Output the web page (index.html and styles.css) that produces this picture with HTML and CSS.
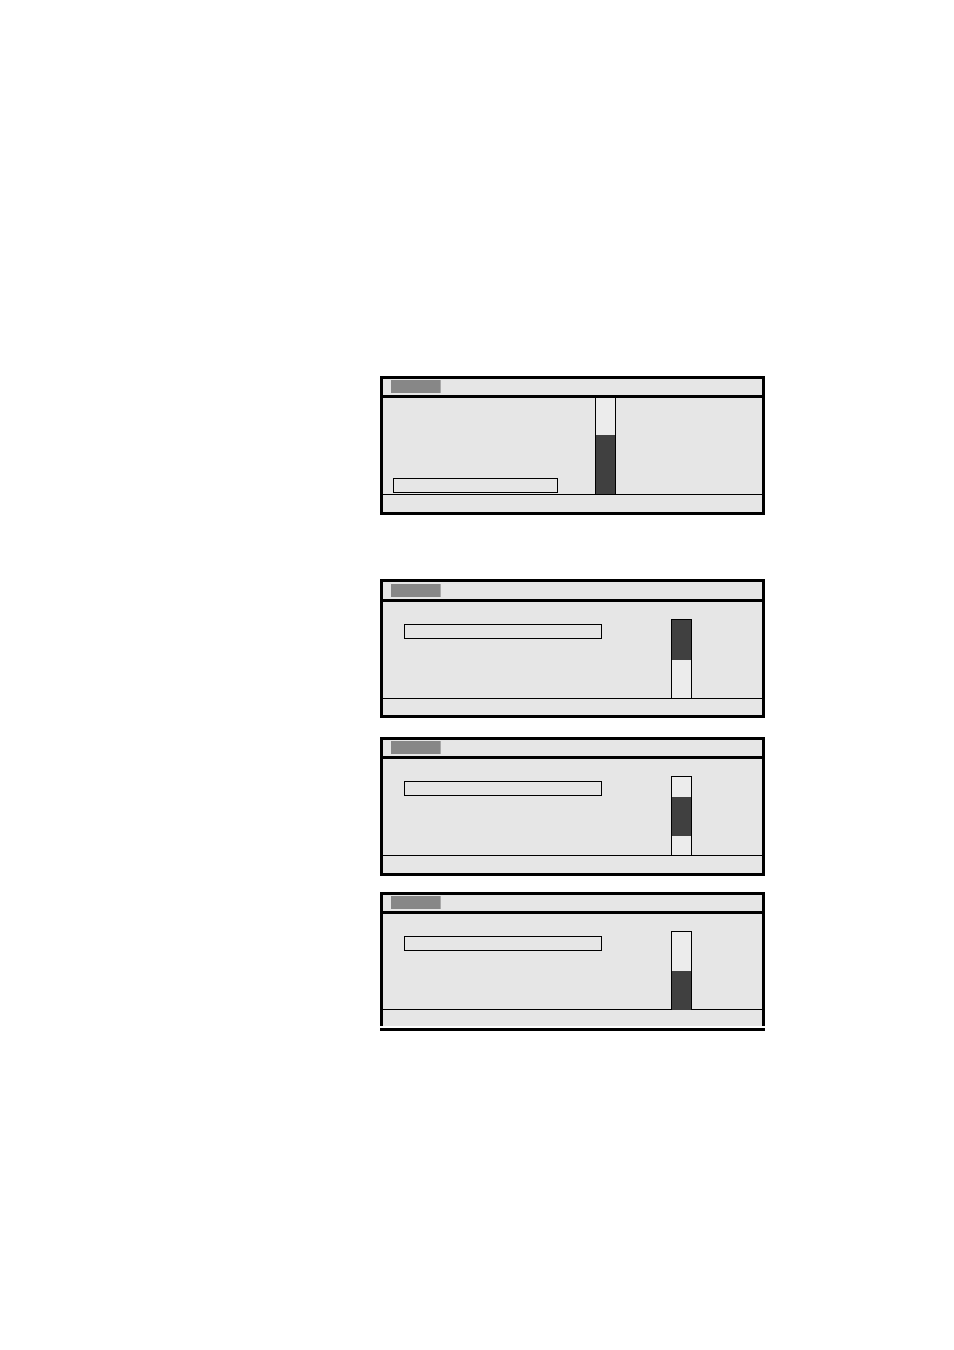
FILE: index.html
```html
<!DOCTYPE html>
<html>
<head>
<meta charset="utf-8">
<link rel="stylesheet" href="styles.css">
</head>
<body>
<div class="page">
  <div class="panel">
    <div class="header"><div class="tag"></div></div>
    <div class="body body-wide">
      <div class="left-col"><div class="field field-short"></div></div>
      <div class="scroll scroll-full"><div class="thumb" style="margin-top:37px;height:59px"></div></div>
    </div>
    <div class="footer"></div>
  </div>

  <div class="panel panel-2">
    <div class="header header-17"><div class="tag tag-low"></div></div>
    <div class="body body-narrow">
      <div class="field field-long"></div>
      <div class="scroll scroll-part"><div class="thumb" style="margin-top:0;height:40px"></div></div>
    </div>
    <div class="footer footer-16"></div>
  </div>

  <div class="panel panel-3">
    <div class="header"><div class="tag"></div></div>
    <div class="body body-narrow">
      <div class="field field-long"></div>
      <div class="scroll scroll-part"><div class="thumb" style="margin-top:20px;height:39px"></div></div>
    </div>
    <div class="footer"></div>
  </div>

  <div class="panel panel-4 panel-open">
    <div class="header"><div class="tag"></div></div>
    <div class="body body-narrow body-95">
      <div class="field field-long"></div>
      <div class="scroll scroll-part scroll-78"><div class="thumb" style="margin-top:39px;height:39px"></div></div>
    </div>
    <div class="footer footer-16"></div>
  </div>
  <div class="panel-base"></div>
</div>
</body>
</html>
```

FILE: styles.css
```css
html, body {
  margin: 0;
  padding: 0;
  background: #ffffff;
}

.page {
  display: flex;
  flex-direction: column;
  width: 385px;
  padding: 376px 0 0 380px;
}

.panel {
  box-sizing: border-box;
  width: 385px;
  border: 3px solid #000;
  background: #e6e6e6;
  display: flex;
  flex-direction: column;
}

.panel-2 { margin-top: 64px; }
.panel-3 { margin-top: 19px; }
.panel-4 { margin-top: 16px; }

.panel-open { border-bottom: none; }

.panel-base {
  width: 385px;
  height: 3px;
  margin-top: 2px;
  background: #000;
}

.header {
  height: 16px;
  border-bottom: 3px solid #000;
  display: flex;
  align-items: flex-start;
  padding-left: 8px;
}

.header-17 { height: 17px; }

.tag {
  width: 49px;
  height: 13px;
  margin-top: 1px;
  background: #878787;
  border-right: 1px solid #a9a9a9;
}

.tag-low { margin-top: 2px; }

.body {
  height: 96px;
  border-bottom: 1px solid #000;
  display: flex;
  align-items: flex-start;
}

.body-95 { height: 95px; }

.footer { height: 17px; }
.footer-16 { height: 16px; }

.body-wide {
  align-items: stretch;
}

.left-col {
  width: 202px;
  padding-left: 10px;
  display: flex;
  align-items: flex-end;
  padding-bottom: 1px;
}

.field {
  box-sizing: border-box;
  height: 15px;
  border: 1px solid #000;
  background: #e6e6e6;
}

.field-short { width: 165px; }

.field-long {
  width: 198px;
  margin: 22px 0 0 21px;
}

.scroll {
  box-sizing: border-box;
  width: 21px;
  border: 1px solid #000;
  border-bottom: none;
  background: #ececec;
  display: flex;
  flex-direction: column;
}

.scroll-full {
  border-top: none;
  height: 96px;
}

.scroll-part {
  height: 79px;
  margin: 17px 0 0 69px;
}

.scroll-78 { height: 78px; }

.thumb {
  background: #404040;
  flex: none;
}
```
